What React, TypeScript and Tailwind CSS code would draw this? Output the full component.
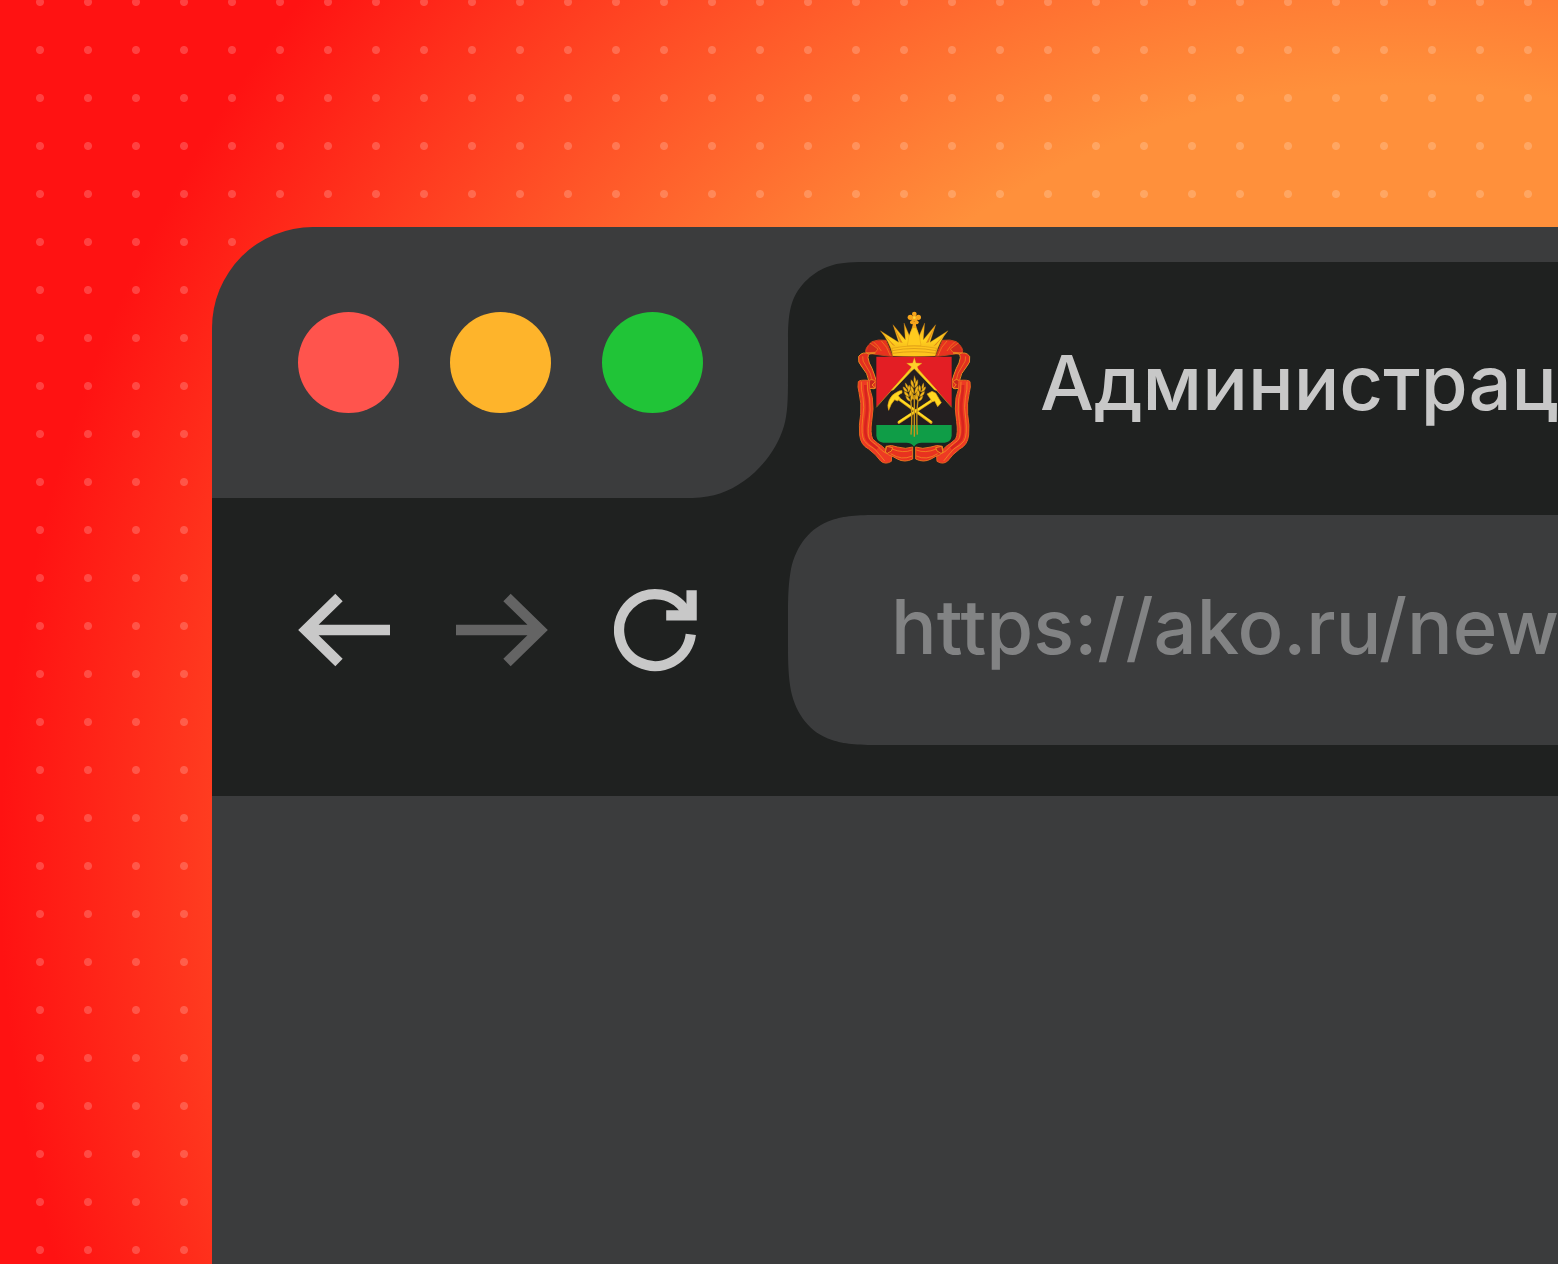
function Emblem() {
  return (
    <svg viewBox="0 0 390 495" className="h-[165px] w-[130px] shrink-0" role="img" aria-label="Герб">
      <defs>
        <linearGradient id="gold" x1="0" y1="0" x2="0" y2="1">
          <stop offset="0" stopColor="#f6a81a" />
          <stop offset="0.55" stopColor="#ffd21f" />
          <stop offset="1" stopColor="#f0a818" />
        </linearGradient>
        <g id="ribbon" strokeLinejoin="round">
          <path
            d="M128 155 L48 144 Q42 130 66 110 Q84 102 108 106 Z"
            fill="#e8321f"
            stroke="#c4421a"
            strokeWidth="3"
          />
          <path d="M60 114 L84 132 L76 142 L48 143" fill="#cf2a1d" stroke="#f08a1d" strokeWidth="2" />
          <path d="M70 110 Q86 124 94 138 M94 108 Q112 124 121 152" fill="none" stroke="#f08a1d" strokeWidth="2" />
          <path
            d="M76 144 Q54 140 54 158 Q56 174 66 190 Q74 210 79 228 L78 247 Q72 256 56 246 L56 226 Q54 206 36 186 Q22 172 26 154 Q38 138 58 147 Z"
            fill="#e3301f"
            stroke="#e98a20"
            strokeWidth="3"
          />
          <path d="M38 154 Q36 168 48 183 Q64 204 67 228" fill="none" stroke="#f08a1d" strokeWidth="2" />
          <path d="M56 229 Q65 218 76 230 L66 240 L76 249 L58 251 Z" fill="#c9261c" stroke="#f08a1d" strokeWidth="3" />
          <path
            d="M25 230 Q28 224 58 226 Q56 250 67 278 Q72 310 65 350 Q60 384 68 402 Q82 415 98 425 Q108 440 126 438 L124 469 Q106 480 92 468 Q78 448 56 432 Q32 420 29 390 Q26 362 32 328 Q35 294 27 262 Q22 246 25 230 Z"
            fill="#ee3a24"
            stroke="#e9641f"
            strokeWidth="3"
          />
          <path
            d="M34 230 Q32 252 39 278 Q44 306 38 340 Q32 390 43 408 Q52 420 74 432 Q90 450 104 468 M52 230 Q50 254 59 282 Q63 314 57 350 Q50 394 62 407 Q76 416 90 430 Q102 446 124 448"
            fill="none"
            stroke="#f49a1f"
            strokeWidth="2"
          />
          <path d="M46 240 Q46 256 50 284 Q54 312 47 350 Q43 390 52 404 Q62 416 82 431" fill="none" stroke="#d9241f" strokeWidth="8" />
          <path
            d="M108 424 Q124 418 142 426 Q168 434 188 426 L188 462 Q164 474 142 462 Q130 454 116 450 L106 440 Z"
            fill="#e8321f"
            stroke="#e9741f"
            strokeWidth="3"
          />
          <path d="M106 442 L110 424 L128 428 L124 438 L112 445 Z" fill="#bd241c" stroke="#f08a1d" strokeWidth="3" />
          <path d="M126 432 Q160 446 186 435 M122 446 Q156 468 186 453" fill="none" stroke="#f49a1f" strokeWidth="2" />
        </g>
        <g id="ear" fill="#f5b81c" stroke="#a87a12" strokeWidth="1">
          <path d="M0 -44 Q7 -36 3 -28 Q-4 -30 0 -44 Z" />
          <path d="M-1 -20 Q-13 -24 -10 -36 Q-1 -32 -1 -20 Z" />
          <path d="M1 -20 Q13 -24 10 -36 Q1 -32 1 -20 Z" />
          <path d="M-1 -8 Q-13 -12 -11 -24 Q-1 -20 -1 -8 Z" />
          <path d="M1 -8 Q13 -12 11 -24 Q1 -20 1 -8 Z" />
          <path d="M-1 4 Q-12 0 -10 -12 Q-1 -8 -1 4 Z" />
          <path d="M1 4 Q12 0 10 -12 Q1 -8 1 4 Z" />
        </g>
      </defs>

      <use href="#ribbon" />
      <use href="#ribbon" transform="matrix(-1 0 0 1 385 0)" />

      {/* crown */}
      <g strokeLinejoin="round">
        <path
          d="M128 150 Q118 108 91 77 L146 112 L129 59 L166 104 L162 54 L180 96 Q182 78 188 62 L198 62 Q204 78 206 96 L224 54 L220 104 L257 59 L240 112 L294 77 Q268 108 257 150 Z"
          fill="url(#gold)"
          stroke="#c07a12"
          strokeWidth="1"
        />
        <path d="M91 77 L136 124 L128 120 Z M294 77 L250 124 L258 120 Z M129 59 L158 114 L150 112 Z M257 59 L228 114 L236 112 Z" fill="#e08c18" />
        <path d="M172 122 Q174 90 188 68 L198 68 Q211 90 213 122 Z" fill="#ffcb1e" stroke="#d08a14" strokeWidth="1" />
        <path d="M126 130 Q192 116 259 130 L256 153 Q192 158 128 153 Z" fill="#ffc41d" stroke="#c07a12" strokeWidth="1" />
        <path d="M127 137 Q192 124 258 137 M128 145 Q192 135 257 145" fill="none" stroke="#d08f14" strokeWidth="2" />
      </g>
      <g fill="#f7a51b">
        <circle cx="193" cy="27" r="7" />
        <circle cx="181" cy="37" r="8" />
        <circle cx="205" cy="37" r="8" />
        <circle cx="193" cy="41" r="9" />
        <circle cx="186" cy="52" r="6" />
        <circle cx="200" cy="52" r="6" />
        <rect x="188" y="50" width="10" height="18" />
      </g>
      <circle cx="193" cy="38" r="4" fill="#ffd83a" />

      {/* shield */}
      <path d="M79 155 H305 V392 Q303 411 284 413 H215 Q199 413 192 425 Q185 413 169 413 H100 Q81 411 79 392 Z" fill="#231f20" />
      <path d="M79 155 H305 V305 L192 184 L79 305 Z" fill="#e31e24" />
      <path d="M79 360 H305 V392 Q303 411 284 413 H215 Q199 413 192 425 Q185 413 169 413 H100 Q81 411 79 392 Z" fill="#0f9d47" />
      <path d="M79 307 L192 180 L305 307" fill="none" stroke="#d8a01c" strokeWidth="2" />
      <path d="M124 256 L192 179 L261 256 L254 255 L192 190 L130 255 Z" fill="#ffd21f" stroke="#e7b01b" strokeWidth="2" />
      <path
        d="M193 158 L198 174 L216 175 L202 185 L207 201 L193 191 L179 201 L184 185 L170 175 L188 174 Z"
        fill="#ffd02a"
        stroke="#d99a15"
        strokeWidth="1"
      />

      <g strokeLinecap="round" fill="none">
        <path d="M144 280 L243 352" stroke="#e0a416" strokeWidth="9" />
        <path d="M144 279 L242 350" stroke="#ffe023" strokeWidth="5" />
        <path d="M147 352 L252 283" stroke="#e0a416" strokeWidth="9" />
        <path d="M147 351 L252 282" stroke="#ffe023" strokeWidth="5" />
      </g>
      <path
        d="M156 257 Q148 256 140 262 Q126 268 118 284 Q110 302 116 316 Q122 296 134 284 L142 288 L151 280 L145 272 Q150 266 156 264 Z"
        fill="#ffd820"
        stroke="#d99a15"
        strokeWidth="2"
      />
      <path
        d="M231 267 L246 259 L257 264 L274 293 L263 305 L254 288 L246 290 L240 280 Z"
        fill="#ffd820"
        stroke="#d99a15"
        strokeWidth="2"
      />

      <g fill="none" stroke="#c9951a" strokeWidth="4">
        <path d="M193 270 V395" />
        <path d="M182 284 Q188 330 183 389" />
        <path d="M204 284 Q198 330 202 389" />
      </g>
      <use href="#ear" transform="translate(193 278) scale(1 1.5)" />
      <use href="#ear" transform="translate(181 284) rotate(-17) scale(1 1.2)" />
      <use href="#ear" transform="translate(205 284) rotate(17) scale(1 1.2)" />
    </svg>
  );
}

function BackIcon() {
  return (
    <svg viewBox="0 0 92 84" className="h-[84px] w-[92px]" fill="none" stroke="currentColor" strokeWidth="10.5">
      <path d="M92 42 H8 M41 9.5 L7.7 42 L41 74.5" />
    </svg>
  );
}

function ReloadIcon() {
  return (
    <svg viewBox="0 0 92 84" className="h-[84px] w-[92px]" fill="none" stroke="currentColor" strokeWidth="10.3">
      <path d="M76.8 46.4 A36 36 0 1 1 73.5 26.5" />
      <path d="M77.6 2.2 V27.4 H52.2" />
    </svg>
  );
}

const lights = [
  { label: "Закрыть", color: "bg-[#ff544d]" },
  { label: "Свернуть", color: "bg-[#feb42b]" },
  { label: "Развернуть", color: "bg-[#20c437]" },
];

function TabStrip() {
  return (
    <header className="flex items-end">
      <div className="flex w-[576px] shrink-0 gap-[51px] self-start pt-[85px] pl-[86px]">
        {lights.map((light) => (
          <button
            key={light.label}
            type="button"
            aria-label={light.label}
            className={`size-[101px] rounded-full ${light.color}`}
          />
        ))}
      </div>

      <div className="relative mt-[35px] flex h-[236px] min-w-0 flex-1 rounded-tl-[100px] bg-[#1f2120]">
        <svg viewBox="0 0 210 236" className="absolute top-0 -left-[110px] h-[236px] w-[210px]" fill="#1f2120" aria-hidden="true">
          <path d="M-5 236.5 C14 236.5 30 235.5 42 231.5 C72 221 97 194 106 164 C109.5 152 110 138 110 115 V75 C110 62 111 50 114 41 C120 23 136 9 152 4 C160 1 170 0 187 0 H210 V236.5 Z" />
        </svg>
        <div className="relative flex min-w-0 flex-1 items-start gap-[60px] overflow-hidden pt-[43px] pl-[62px]">
          <Emblem />
          <h1 className="pt-8 text-[76px] leading-[90px] font-medium whitespace-nowrap text-[#c8c8c8]">
            Администрац
          </h1>
        </div>
      </div>
    </header>
  );
}

function Toolbar() {
  return (
    <div className="flex h-[298px] bg-[#1f2120] pt-[17px] pb-[51px]">
      <nav className="flex w-[576px] shrink-0 items-center gap-[66px] pl-[86px] text-[#c8c8c8]">
        <button type="button" aria-label="Назад">
          <BackIcon />
        </button>
        <button type="button" aria-label="Вперёд" className="-scale-x-100 text-[#646464]">
          <BackIcon />
        </button>
        <button type="button" aria-label="Обновить">
          <ReloadIcon />
        </button>
      </nav>

      <div className="relative flex min-w-0 flex-1 items-center rounded-l-[100px] bg-[#3b3c3d] pb-2 pl-[103px]">
        <svg viewBox="0 0 110 230" className="absolute top-0 left-0 h-[230px] w-[110px]" fill="#3b3c3d" aria-hidden="true">
          <path d="M0 100 C0 80 0.5 68 3 54 C8 31 22 12 44 5 C56 1 68 0 92 0 H110 V230 H92 C68 230 56 229 44 225 C22 218 8 199 3 176 C0.5 162 0 150 0 130 Z" />
        </svg>
        <input
          type="text"
          aria-label="Адрес"
          defaultValue="https://ako.ru/new"
          className="relative h-[100px] min-w-0 flex-1 bg-transparent text-[76px] font-medium text-[#828384] outline-none"
        />
      </div>
    </div>
  );
}

function App() {
  return (
    <div className="relative flex min-h-screen overflow-hidden bg-[radial-gradient(circle_at_1411px_870px,#ff903b_785px,#ff1212_1411px)] pt-[227px] pl-[212px] font-['Inter',sans-serif]">
      <div className="absolute inset-0 bg-[radial-gradient(circle,rgba(255,255,255,0.2)_3.5px,transparent_4.5px)] bg-[length:48px_48px] bg-[position:16px_26px]" />
      <main className="relative flex min-w-0 flex-1 flex-col overflow-hidden rounded-tl-[101px] bg-[#3b3c3d]">
        <TabStrip />
        <Toolbar />
      </main>
    </div>
  );
}

export default App;
